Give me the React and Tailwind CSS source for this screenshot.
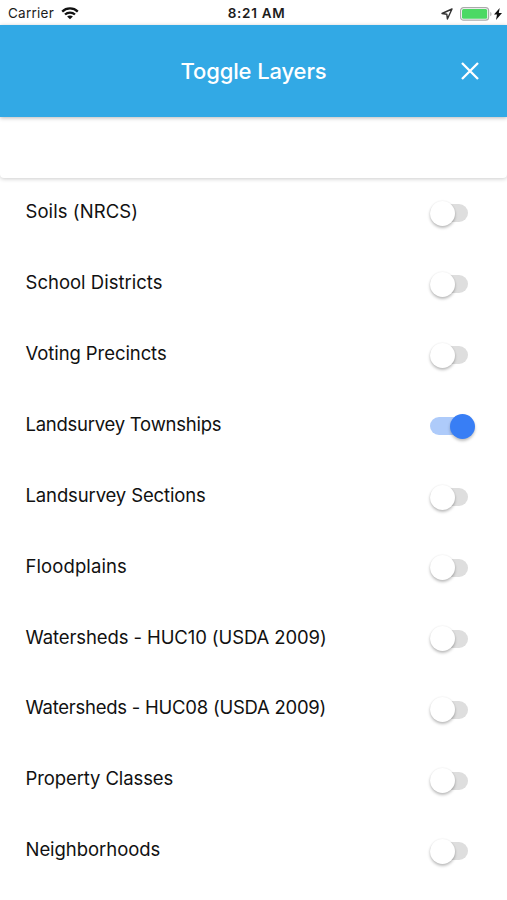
const layers = [
  { name: 'Soils (NRCS)', on: false, tracking: 'tracking-[0.08px]' },
  { name: 'School Districts', on: false, tracking: 'tracking-[0.01px]' },
  { name: 'Voting Precincts', on: false, tracking: 'tracking-[-0.08px]' },
  { name: 'Landsurvey Townships', on: true, tracking: 'tracking-[-0.25px]' },
  { name: 'Landsurvey Sections', on: false, tracking: 'tracking-[-0.13px]' },
  { name: 'Floodplains', on: false, tracking: 'tracking-[0.1px]' },
  { name: 'Watersheds - HUC10 (USDA 2009)', on: false, tracking: 'tracking-[-0.1px]' },
  { name: 'Watersheds - HUC08 (USDA 2009)', on: false, tracking: 'tracking-[-0.25px]' },
  { name: 'Property Classes', on: false, tracking: 'tracking-[-0.11px]' },
  { name: 'Neighborhoods', on: false, tracking: 'tracking-[-0.05px]' },
];

function StatusBar() {
  return (
    <div className="grid h-[25px] grid-cols-3 items-center bg-white pt-[2px] font-['Inter',sans-serif] text-[#1c1c1c]">
      <div className="flex items-center gap-[7px] pl-[8px]">
        <span className="text-[13.5px] leading-none tracking-[0.25px]">Carrier</span>
        <svg width="18" height="13" viewBox="0 0 18 13" fill="none" stroke="#111" strokeWidth="2.3">
          <path d="M1.2 4.6C5.5.4 12.5.4 16.8 4.6" />
          <path d="M4 7.5c2.8-2.6 7.2-2.6 10 0" />
          <path d="M9 12.3 6.1 9.5c1.6-1.5 4.2-1.5 5.8 0z" fill="#111" stroke="none" />
        </svg>
      </div>
      <div className="whitespace-nowrap pl-[6px] text-center text-[13.5px] font-semibold leading-none tracking-[0.7px]">8:21 AM</div>
      <div className="flex items-center justify-end pr-[5px]">
        <svg className="mr-[7px]" width="12" height="12" viewBox="0 0 12 12" fill="none" stroke="#333" strokeWidth="1.4" strokeLinejoin="round">
          <path d="M11 1 1 5.5l4.8.7L6.4 11z" />
        </svg>
        <svg width="33" height="14" viewBox="0 0 33 14">
          <rect x=".6" y=".6" width="28" height="12.6" rx="3" fill="#fff" stroke="#aaa" strokeWidth="1.2" />
          <rect x="2" y="2" width="25.2" height="9.8" rx="1.5" fill="#4cd964" />
          <path d="M30.3 4.7c1.6.8 1.6 3.8 0 4.6z" fill="#aaa" />
        </svg>
        <svg className="ml-[1px]" width="8" height="12" viewBox="0 0 8 12" fill="#111">
          <path d="M5.7 0 0 6.6h3L2 12l6-7H4.8z" />
        </svg>
      </div>
    </div>
  );
}

function Toggle({ on }) {
  return (
    <div role="switch" aria-checked={on} className={`flex h-[18px] w-[38px] items-center rounded-full ${on ? 'bg-[#aecbfa]' : 'bg-[#dedede]'}`}>
      <div
        className={`size-[25px] shrink-0 rounded-full ${
          on
            ? 'ml-[19.5px] bg-[#387ef5] shadow-[0_2px_3px_rgba(0,0,0,0.25)]'
            : 'bg-white shadow-[0_2px_3px_rgba(0,0,0,0.25),0_0_2px_rgba(0,0,0,0.08)]'
        }`}
      />
    </div>
  );
}

export default function App() {
  return (
    <div className="flex h-[900px] w-[507px] flex-col overflow-hidden bg-white">
      <StatusBar />
      <header className="z-20 grid h-[92px] shrink-0 grid-cols-[1fr_auto_1fr] items-center bg-[#32a9e5] shadow-[0_1px_4px_rgba(0,0,0,0.28)]">
        <h1 className="col-start-2 whitespace-nowrap font-['Inter',sans-serif] text-[22px] font-[450] leading-none tracking-[-0.12px] text-white">Toggle Layers</h1>
        <button className="mr-[28px] justify-self-end" aria-label="Close">
          <svg width="18" height="18" viewBox="0 0 18 18" fill="none" stroke="#fff" strokeWidth="2.3">
            <path d="m1 1 16 16M17 1 1 17" />
          </svg>
        </button>
      </header>
      <div className="z-10 h-[61px] shrink-0 rounded-b-[4px] bg-white shadow-[0_1px_4px_rgba(0,0,0,0.2)]" />
      <ul className="shrink-0">
        {layers.map((layer) => (
          <li key={layer.name} className="flex h-[70.9px] items-center justify-between pl-[25.5px] pr-[39px]">
            <span className={`-mt-[4px] whitespace-nowrap font-['Inter',sans-serif] text-[18.5px] leading-none text-[#111] ${layer.tracking}`}>{layer.name}</span>
            <Toggle on={layer.on} />
          </li>
        ))}
      </ul>
    </div>
  );
}
